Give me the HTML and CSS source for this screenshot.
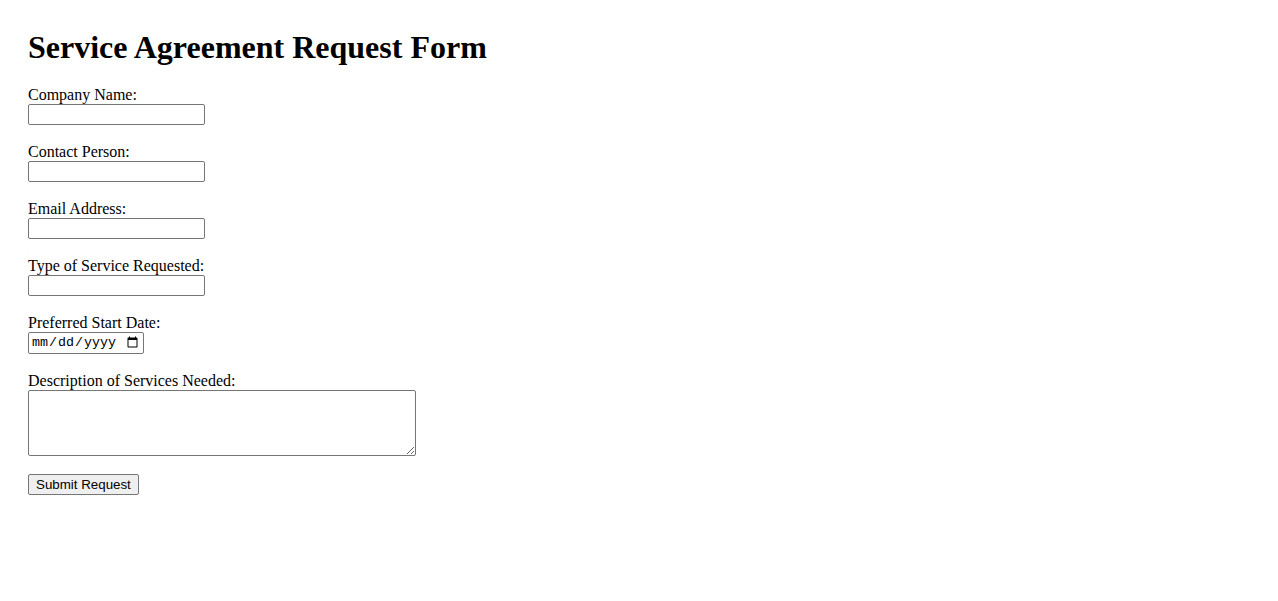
FILE: index.html
```html
<!DOCTYPE html>
<html lang="en">
<head>
<meta charset="utf-8">
<title>Service Agreement Request Form</title>
<link rel="stylesheet" href="styles.css">
</head>
<body>
<div class="page">
<h1 class="title">Service Agreement Request Form</h1>
<form class="form">
<label class="label" for="company">Company Name:</label><br>
<input class="field" type="text" id="company"><br><br>
<label class="label" for="contact">Contact Person:</label><br>
<input class="field" type="text" id="contact"><br><br>
<label class="label" for="email">Email Address:</label><br>
<input class="field" type="email" id="email"><br><br>
<label class="label" for="service">Type of Service Requested:</label><br>
<input class="field" type="text" id="service"><br><br>
<label class="label" for="start">Preferred Start Date:</label><br>
<input class="date" type="date" id="start"><br><br>
<label class="label" for="desc">Description of Services Needed:</label><br>
<textarea class="area" id="desc" rows="4" cols="50"></textarea><br><br>
<input class="submit" type="submit" value="Submit Request">
</form>
</div>
</body>
</html>
```
FILE: styles.css
```css
body {
  margin: 8px;
  font-family: "Liberation Serif", "Times New Roman", serif;
  font-size: 16px;
  color: #000;
  background: #fff;
}
.page {
  padding: 0 20px;
}
.title {
  font-size: 32px;
  font-weight: bold;
  margin: 21px 0 20px;
}
.field {
  font-family: "Liberation Sans", Arial, sans-serif;
  font-size: 13.333px;
  width: 177px;
  height: 21px;
  box-sizing: border-box;
  border: 1px solid #767676;
  border-radius: 2px;
  padding: 1px 2px;
}
.date {
  font-family: "Liberation Mono", monospace;
  font-size: 13.333px;
  width: 116px;
  height: 22px;
  box-sizing: border-box;
  border: 1px solid #767676;
  border-radius: 2px;
  padding: 1px 2px;
}
.area {
  font-family: "Liberation Mono", monospace;
  font-size: 13.333px;
  width: 388px;
  height: 66px;
  box-sizing: border-box;
  border: 1px solid #767676;
  border-radius: 2px;
  padding: 2px;
  vertical-align: bottom;
}
.submit {
  font-family: "Liberation Sans", Arial, sans-serif;
  font-size: 13.333px;
  height: 21px;
  padding: 1px 7px;
  border: 1px solid #767676;
  border-radius: 2px;
  background: #efefef;
  color: #000;
}
```
